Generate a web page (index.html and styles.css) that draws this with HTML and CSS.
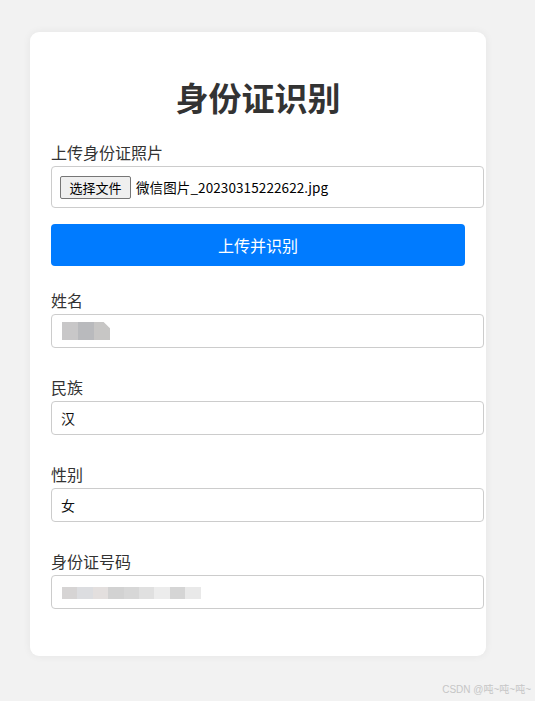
FILE: index.html
```html
<!DOCTYPE html>
<html lang="zh-CN">
<head>
<meta charset="utf-8">
<title>身份证识别</title>
<link rel="stylesheet" href="styles.css">
</head>
<body>
<div class="page">
  <div class="card">
    <h2 class="title">身份证识别</h2>
    <div class="field upload">
      <div class="label">上传身份证照片</div>
      <div class="filebox">
        <span class="filebtn">选择文件</span>
        <span class="filename">微信图片_20230315222622.jpg</span>
      </div>
    </div>
    <button class="submit" type="button">上传并识别</button>
    <div class="field">
      <div class="label">姓名</div>
      <div class="input">
        <span class="blur name-blur">
          <i style="background:#c8c7c8"></i><i style="background:#b9babd"></i><i class="tip" style="background:#c7c6c5"></i>
        </span>
      </div>
    </div>
    <div class="field">
      <div class="label">民族</div>
      <div class="input">汉</div>
    </div>
    <div class="field">
      <div class="label">性别</div>
      <div class="input">女</div>
    </div>
    <div class="field last">
      <div class="label">身份证号码</div>
      <div class="input">
        <span class="blur id-blur">
          <i style="background:#d6d4d4"></i><i style="background:#dcdde0"></i><i style="background:#e3dfde"></i><i style="background:#d2d2d2"></i><i style="background:#d7d7d7"></i><i style="background:#e0e0e0"></i><i style="background:#ececec"></i><i style="background:#d5d5d5"></i><i style="background:#e9e9e9"></i>
        </span>
      </div>
    </div>
  </div>
  <div class="watermark">CSDN @吨~吨~吨~</div>
</div>
</body>
</html>
```

FILE: styles.css
```css
html, body {
  margin: 0;
  padding: 0;
  background: #f2f2f2;
}
body {
  font-family: "Noto Sans CJK SC", "Noto Sans", "Liberation Sans", sans-serif;
  color: #333;
}
.page {
  width: 535px;
  height: 701px;
  padding: 32px 0 0 30px;
  box-sizing: border-box;
  display: flex;
  flex-direction: column;
}
.card {
  width: 456px;
  box-sizing: border-box;
  background: #fff;
  border-radius: 9px;
  box-shadow: 0 0 8px rgba(0, 0, 0, 0.06);
  padding: 45px 21px 47px 21px;
}
.title {
  margin: 0 0 25px 0;
  text-align: center;
  font-size: 33px;
  line-height: 40px;
  font-weight: 700;
  color: #333;
}
.field {
  margin-bottom: 29px;
}
.field.last {
  margin-bottom: 0;
}
.field.upload {
  margin-bottom: 16px;
}
.label {
  font-size: 16px;
  line-height: 20px;
  color: #333;
  margin-bottom: 4px;
}
.filebox {
  width: 433px;
  height: 42px;
  box-sizing: border-box;
  border: 1px solid #ccc;
  border-radius: 4px;
  padding: 0 8px;
  display: flex;
  align-items: center;
  gap: 5px;
  font-size: 13px;
  color: #000;
}
.filebtn {
  display: inline-flex;
  align-items: center;
  justify-content: center;
  width: 71px;
  height: 23px;
  box-sizing: border-box;
  background: #efefef;
  border: 1px solid #767676;
  border-radius: 2px;
  font-size: 13px;
  color: #000;
}
.filename {
  font-size: 13.5px;
  line-height: 16px;
  letter-spacing: 0.1px;
}
.submit {
  display: block;
  width: 414px;
  height: 42px;
  margin: 0 0 24px 0;
  border: none;
  border-radius: 4px;
  background: #007bff;
  color: #fff;
  font-family: "Noto Sans CJK SC", "Noto Sans", sans-serif;
  font-size: 16px;
  padding: 0;
}
.input {
  width: 433px;
  height: 34px;
  box-sizing: border-box;
  border: 1px solid #ccc;
  border-radius: 4px;
  padding: 0 9px;
  display: flex;
  align-items: center;
  font-size: 14px;
  color: #111;
}
.blur {
  display: flex;
  filter: blur(0.6px);
}
.blur i {
  display: block;
}
.name-blur {
  margin-left: 1px;
}
.name-blur i {
  width: 16px;
  height: 18px;
}
.name-blur i.tip {
  clip-path: polygon(0 0, 60% 0, 100% 35%, 100% 100%, 0 100%);
}
.id-blur {
  margin-left: 1px;
  margin-top: 1px;
}
.id-blur i {
  width: 15.4px;
  height: 12px;
}
.watermark {
  margin-top: auto;
  margin-bottom: 5px;
  align-self: flex-end;
  margin-right: 4px;
  font-family: "Liberation Sans", "Noto Sans CJK SC", sans-serif;
  font-size: 10px;
  color: #c6c6c6;
}
```
